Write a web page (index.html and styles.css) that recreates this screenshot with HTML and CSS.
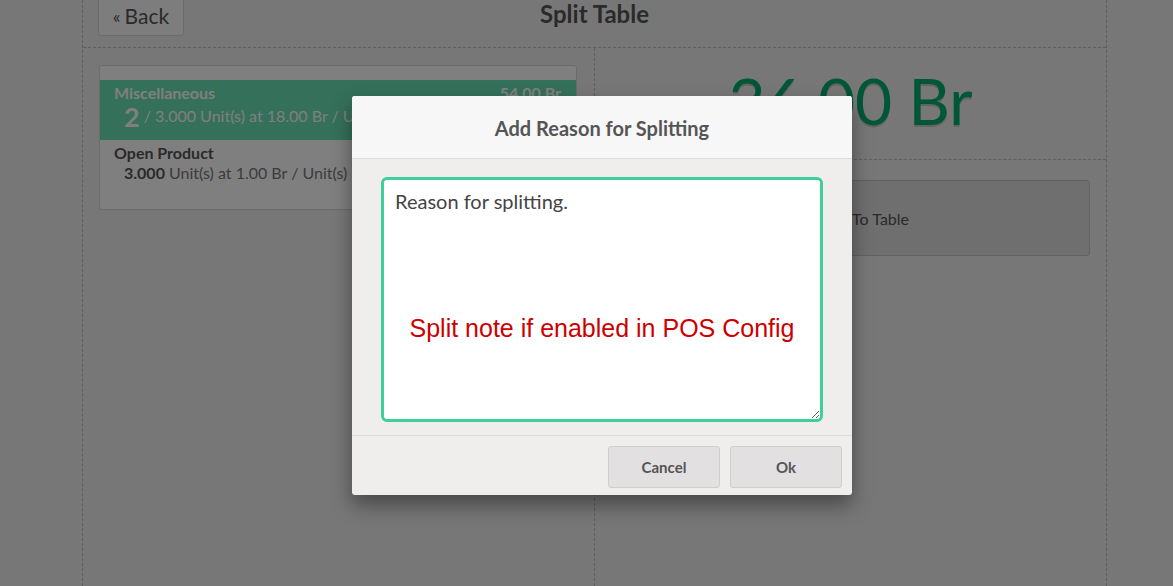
FILE: index.html
```html
<!DOCTYPE html>
<html>
<head>
<meta charset="utf-8">
<link rel="stylesheet" href="styles.css">
</head>
<body>
<div class="screen">
  <div class="frame">
    <header class="topbar">
      <div class="topbar-left">
        <button class="back-btn"><span class="chev">«</span>Back</button>
      </div>
      <h1 class="title">Split Table</h1>
      <div class="topbar-right"></div>
    </header>
    <div class="columns">
      <section class="col col-left">
        <div class="order-card">
          <div class="orderline selected">
            <div class="line-top">
              <span class="pname">Miscellaneous</span>
              <span class="price">54.00 Br</span>
            </div>
            <div class="line-info">
              <span class="qty-big">2</span>
              <span class="info-text">/ 3.000 Unit(s) at 18.00 Br / Unit(s)</span>
            </div>
          </div>
          <div class="orderline">
            <div class="line-top">
              <span class="pname">Open Product</span>
            </div>
            <div class="line-info">
              <span class="qty-em">3.000</span>
              <span class="info-text">Unit(s) at 1.00 Br / Unit(s)</span>
            </div>
          </div>
        </div>
      </section>
      <section class="col col-right">
        <div class="total-block">
          <div class="total">36.00 Br</div>
        </div>
        <div class="action-block">
          <button class="action-btn">Transfer To Table</button>
        </div>
      </section>
    </div>
  </div>

  <div class="overlay"></div>

  <div class="modal">
    <div class="modal-header">Add Reason for Splitting</div>
    <div class="modal-body">
      <div class="note-wrap">
        <textarea class="note">Reason for splitting.</textarea>
        <div class="annotation">Split note if enabled in POS Config</div>
      </div>
    </div>
    <div class="modal-footer">
      <button class="mbtn">Cancel</button>
      <button class="mbtn">Ok</button>
    </div>
  </div>
</div>
</body>
</html>
```

FILE: styles.css
```css
html, body {
  margin: 0;
  padding: 0;
  height: 100%;
  overflow: hidden;
}
body {
  background: #f0eeee;
  font-family: Lato, "Open Sans", sans-serif;
  color: #555;
}
.screen {
  position: relative;
  width: 1173px;
  height: 586px;
  overflow: hidden;
}
.frame {
  margin-left: 82px;
  width: 1023px;
  height: 586px;
  border-left: 1px dashed #bcbcbc;
  border-right: 1px dashed #bcbcbc;
  display: flex;
  flex-direction: column;
}
.topbar {
  height: 47px;
  border-bottom: 1px dashed #bcbcbc;
  display: grid;
  grid-template-columns: 1fr auto 1fr;
  align-items: start;
}
.topbar-left {
  padding-left: 15px;
}
.back-btn {
  margin-top: -8px;
  width: 86px;
  height: 44px;
  padding: 3px 0 0 0;
  background: #fafafa;
  border: 1px solid #d8d8d8;
  border-radius: 3px;
  font-family: Lato, sans-serif;
  font-size: 21px;
  color: #555;
  text-align: center;
}
.chev {
  font-size: 18px;
  margin-right: 4px;
  vertical-align: 1px;
}
.title {
  margin: 0;
  padding-top: 0;
  font-size: 24px;
  line-height: 28px;
  font-weight: 700;
  color: #555;
}
.columns {
  flex: 1;
  display: grid;
  grid-template-columns: 511px 512px;
}
.col-left {
  padding: 17px 17px 0 16px;
}
.col-right {
  border-left: 1px dashed #bcbcbc;
  display: flex;
  flex-direction: column;
}
.order-card {
  background: #fff;
  border: 1px solid #d6d6d6;
  border-radius: 3px;
  padding: 14px 0 16px;
}
.orderline {
  padding: 5px 15px 9px 14px;
}
.orderline.selected {
  background: #6ae0b4;
  color: #fff;
}
.line-top {
  display: flex;
  justify-content: space-between;
  font-size: 16px;
  font-weight: 700;
  line-height: 16px;
  color: #555;
}
.selected .line-top {
  color: #fff;
}
.line-info {
  padding-left: 10px;
  font-size: 16px;
  color: #777;
  line-height: 22px;
  margin-top: 1px;
}
.selected .line-info {
  color: #fff;
  line-height: 28px;
}
.qty-big {
  font-size: 27px;
  font-weight: 700;
  vertical-align: -5px;
}
.qty-em {
  font-weight: 700;
  color: #555;
}
.total-block {
  height: 111px;
  border-bottom: 1px dashed #bcbcbc;
  display: flex;
  justify-content: center;
  align-items: flex-start;
}
.total {
  font-size: 64px;
  line-height: 76px;
  margin-top: 15px;
  color: #00ae70;
  text-shadow: 0 2px rgba(0, 0, 0, 0.17);
}
.action-block {
  padding: 20px 16px 0 16px;
}
.action-btn {
  width: 100%;
  height: 76px;
  background: #dedede;
  border: 1px solid #c4c4c4;
  border-radius: 3px;
  font-family: Lato, sans-serif;
  font-size: 16px;
  color: #555;
}
.overlay {
  position: absolute;
  inset: 0;
  background: rgba(0, 0, 0, 0.5);
}
.modal {
  position: absolute;
  left: 352px;
  top: 96px;
  width: 500px;
  height: 399px;
  background: #f0eeec;
  border-radius: 3px;
  box-shadow: 0 10px 20px rgba(0, 0, 0, 0.4);
  display: flex;
  flex-direction: column;
  overflow: hidden;
}
.modal-header {
  height: 63px;
  background: #f7f7f7;
  border-bottom: 1px solid #dcdcdc;
  font-size: 20px;
  font-weight: 700;
  color: #555;
  text-align: center;
  line-height: 64px;
  box-sizing: border-box;
}
.modal-body {
  flex: 1;
  padding: 18px 29px 0;
  border-bottom: 1px solid #dcdcdc;
}
.note-wrap {
  position: relative;
  height: 245px;
}
.note {
  display: block;
  box-sizing: border-box;
  width: 100%;
  height: 245px;
  margin: 0;
  padding: 9px 11px;
  border: 3px solid #3ecf9c;
  border-radius: 6px;
  background: #fff;
  font-family: Lato, sans-serif;
  font-size: 20px;
  color: #444;
  outline: none;
}
.annotation {
  position: absolute;
  left: 0;
  right: 0;
  top: 137px;
  text-align: center;
  font-family: "Liberation Sans", Arial, sans-serif;
  font-size: 25px;
  color: #cc0000;
  pointer-events: none;
}
.modal-footer {
  height: 59px;
  display: flex;
  justify-content: flex-end;
  align-items: flex-start;
  gap: 10px;
  padding: 10px 10px 0;
  box-sizing: border-box;
}
.mbtn {
  width: 112px;
  height: 42px;
  background: #e2e0e0;
  border: 1px solid #d0cdcd;
  border-radius: 3px;
  font-family: Lato, sans-serif;
  font-size: 15px;
  font-weight: 700;
  color: #555;
}
```
